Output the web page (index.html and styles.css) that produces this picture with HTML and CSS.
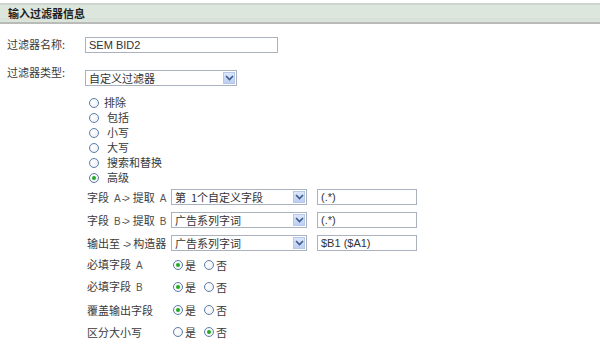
FILE: index.html
```html
<!DOCTYPE html>
<html lang="zh">
<head>
<meta charset="utf-8">
<link rel="stylesheet" href="styles.css">
</head>
<body>
<div class="header">输入过滤器信息</div>

<div class="row r-name">
  <div class="label">过滤器名称:</div>
  <div class="input w-name">SEM BID2</div>
</div>

<div class="row r-type">
  <div class="label">过滤器类型:</div>
  <div class="select w-type"><span class="sel-text">自定义过滤器</span><span class="arrow"><svg width="9" height="6" viewBox="0 0 9 6"><path d="M1 1 L4.5 4.5 L8 1" fill="none" stroke="#3d5a8c" stroke-width="1.6"/></svg></span></div>
</div>

<div class="radios">
  <div class="ritem"><span class="radio"></span><span class="rt">排除</span></div>
  <div class="ritem"><span class="radio"></span><span class="rt sp">包括</span></div>
  <div class="ritem"><span class="radio"></span><span class="rt sp">小写</span></div>
  <div class="ritem"><span class="radio"></span><span class="rt sp">大写</span></div>
  <div class="ritem"><span class="radio"></span><span class="rt sp">搜索和替换</span></div>
  <div class="ritem"><span class="radio on"></span><span class="rt sp">高级</span></div>
</div>

<div class="adv">
  <div class="arow">
    <div class="alabel">字段<span class="lat">A</span><span class="op">-&gt;</span>提取<span class="lat">A</span></div>
    <div class="select w-adv"><span class="sel-text">第&nbsp;&nbsp;1个自定义字段</span><span class="arrow"><svg width="9" height="6" viewBox="0 0 9 6"><path d="M1 1 L4.5 4.5 L8 1" fill="none" stroke="#3d5a8c" stroke-width="1.6"/></svg></span></div>
    <div class="input w-expr">(.*)</div>
  </div>
  <div class="arow">
    <div class="alabel">字段<span class="lat">B</span><span class="op">-&gt;</span>提取<span class="lat">B</span></div>
    <div class="select w-adv"><span class="sel-text">广告系列字词</span><span class="arrow"><svg width="9" height="6" viewBox="0 0 9 6"><path d="M1 1 L4.5 4.5 L8 1" fill="none" stroke="#3d5a8c" stroke-width="1.6"/></svg></span></div>
    <div class="input w-expr">(.*)</div>
  </div>
  <div class="arow">
    <div class="alabel">输出至<span class="op wide">-&gt;</span>构造器</div>
    <div class="select w-adv"><span class="sel-text">广告系列字词</span><span class="arrow"><svg width="9" height="6" viewBox="0 0 9 6"><path d="M1 1 L4.5 4.5 L8 1" fill="none" stroke="#3d5a8c" stroke-width="1.6"/></svg></span></div>
    <div class="input w-expr">$B1 ($A1)</div>
  </div>

  <div class="brows">
    <div class="brow">
      <div class="alabel">必填字段<span class="lat">A</span></div>
      <div class="yn"><span class="radio on"></span><span class="yt">是</span><span class="radio"></span><span class="yt">否</span></div>
    </div>
    <div class="brow">
      <div class="alabel">必填字段<span class="lat">B</span></div>
      <div class="yn"><span class="radio on"></span><span class="yt">是</span><span class="radio"></span><span class="yt">否</span></div>
    </div>
    <div class="brow">
      <div class="alabel">覆盖输出字段</div>
      <div class="yn"><span class="radio on"></span><span class="yt">是</span><span class="radio"></span><span class="yt">否</span></div>
    </div>
    <div class="brow">
      <div class="alabel">区分大小写</div>
      <div class="yn"><span class="radio"></span><span class="yt">是</span><span class="radio on"></span><span class="yt">否</span></div>
    </div>
  </div>
</div>
</body>
</html>
```

FILE: styles.css
```css
html, body {
  margin: 0;
  padding: 0;
  background: #ffffff;
}
body {
  width: 600px;
  height: 350px;
  overflow: hidden;
  font-family: "Liberation Sans", "Noto Sans CJK SC", sans-serif;
  font-size: 11px;
  color: #3a3a3a;
}
.header {
  margin-top: 3px;
  height: 17px;
  line-height: 17px;
  border-top: 2px solid #d0d4d0;
  border-bottom: 2px solid #b8bbb8;
  background: linear-gradient(#dde6dd 0, #dde6dd 75%, #d6dfd6 76%, #dde6dd 100%);
  padding-left: 8px;
  font-family: "Noto Sans CJK SC", sans-serif;
  font-weight: bold;
  font-size: 11px;
  color: #1e1e1e;
}
.row {
  display: flex;
  align-items: flex-start;
}
.r-name {
  margin-top: 13px;
}
.r-type {
  margin-top: 17px;
}
.label {
  width: 77px;
  padding-left: 7px;
  font-family: "Noto Sans CJK SC", sans-serif;
  font-size: 11px;
  line-height: 14px;
  color: #3a3a3a;
}
.r-type .label { margin-top: -5px; }
.input {
  box-sizing: border-box;
  height: 16px;
  border: 1px solid #a9b2bd;
  background: #fff;
  padding-left: 3px;
  line-height: 14px;
  font-size: 11px;
  color: #333;
  white-space: nowrap;
  overflow: hidden;
}
.w-name { width: 193px; margin-left: 1px; }
.select {
  box-sizing: border-box;
  height: 16px;
  border: 1px solid #a9b2bd;
  background: #fff;
  display: flex;
  align-items: center;
  justify-content: space-between;
  padding-left: 3px;
  padding-right: 1px;
  white-space: nowrap;
  overflow: hidden;
}
.sel-text {
  font-family: "Noto Sans CJK SC", sans-serif;
  font-size: 11px;
  line-height: 14px;
  color: #333;
}
.arrow {
  box-sizing: border-box;
  width: 12px;
  height: 12px;
  background: linear-gradient(#dce7fb, #bccef2);
  border: 1px solid #b5c7ea;
  display: flex;
  align-items: center;
  justify-content: center;
}
.w-type { width: 152px; margin-left: 1px; }
.radios {
  margin-top: 9px;
  padding-left: 89px;
}
.ritem {
  height: 15px;
  display: flex;
  align-items: center;
}
.radio {
  box-sizing: border-box;
  width: 10px;
  height: 10px;
  border-radius: 50%;
  border: 1px solid #5d7ea8;
  background: radial-gradient(circle at 40% 40%, #ffffff 0, #e8ecf0 100%);
  display: inline-block;
  position: relative;
  flex: none;
}
.radio.on::after {
  content: "";
  position: absolute;
  left: 2px;
  top: 2px;
  width: 4px;
  height: 4px;
  border-radius: 50%;
  background: #22a822;
}
.rt {
  font-family: "Noto Sans CJK SC", sans-serif;
  font-size: 11px;
  line-height: 15px;
  margin-left: 5px;
  color: #3a3a3a;
}
.rt.sp { margin-left: 8px; }
.adv {
  margin-top: 4px;
  padding-left: 87px;
}
.arow {
  display: flex;
  align-items: flex-start;
  height: 23px;
}
.alabel {
  width: 84px;
  flex: none;
  font-family: "Noto Sans CJK SC", sans-serif;
  font-size: 11px;
  line-height: 14px;
  color: #3a3a3a;
  white-space: nowrap;
}
.arow .alabel { margin-top: 1px; }
.lat {
  font-family: "Liberation Sans", sans-serif;
  font-size: 10px;
  margin: 0 0 0 5px;
  color: #555;
}
.op {
  font-family: "Liberation Sans", sans-serif;
  font-size: 10px;
  margin: 0 4px 0 1px;
  letter-spacing: -1px;
  color: #555;
}
.op.wide { margin-left: 3px; margin-right: 3px; }
.w-adv { width: 136px; }
.w-expr { width: 100px; margin-left: 10px; }
.brows {
  margin-top: -4px;
}
.brow {
  display: flex;
  align-items: center;
  height: 22.3px;
}
.yn {
  display: flex;
  align-items: center;
  padding-left: 2px;
}
.yt {
  font-family: "Noto Sans CJK SC", sans-serif;
  font-size: 11px;
  line-height: 14px;
  margin-left: 2px;
  margin-right: 8px;
  color: #3a3a3a;
}
```
